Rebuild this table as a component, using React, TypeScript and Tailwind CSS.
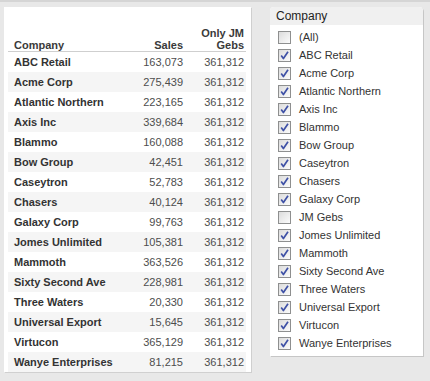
import React from 'react';

const rows: [string, string][] = [
  ['ABC Retail', '163,073'],
  ['Acme Corp', '275,439'],
  ['Atlantic Northern', '223,165'],
  ['Axis Inc', '339,684'],
  ['Blammo', '160,088'],
  ['Bow Group', '42,451'],
  ['Caseytron', '52,783'],
  ['Chasers', '40,124'],
  ['Galaxy Corp', '99,763'],
  ['Jomes Unlimited', '105,381'],
  ['Mammoth', '363,526'],
  ['Sixty Second Ave', '228,981'],
  ['Three Waters', '20,330'],
  ['Universal Export', '15,645'],
  ['Virtucon', '365,129'],
  ['Wanye Enterprises', '81,215'],
];

const filterItems: { label: string; checked: boolean }[] = [
  { label: '(All)', checked: false },
  ...rows.slice(0, 9).map(([name]) => ({ label: name, checked: true })),
  { label: 'JM Gebs', checked: false },
  ...rows.slice(9).map(([name]) => ({ label: name, checked: true })),
];

function CheckBox({ checked }: { checked: boolean }) {
  return (
    <span className="flex h-[13px] w-[13px] shrink-0 items-center justify-center border border-[#8e8f8f] bg-gradient-to-br from-[#dcdcdc] to-[#fbfbfb]">
      {checked && (
        <svg width="11" height="11" viewBox="0 0 11 11">
          <path d="M2.2 5.6 L4.4 8.6 L9 1.8" fill="none" stroke="#3f51a6" strokeWidth="1.7" strokeLinejoin="round" />
        </svg>
      )}
    </span>
  );
}

export default function App() {
  return (
    <div
      className="flex h-[381px] w-[430px] items-start border-t-2 border-[#d5d5d5] bg-[#e8e8e8] pl-[4px] pt-[5px]"
      style={{ fontFamily: '"Liberation Sans", Arial, sans-serif' }}
    >
      {/* Crosstab */}
      <div className="h-[365px] w-[247px] bg-white pl-[4px] pr-[5px] shadow-[1px_1px_0_#cfcfcf]">
        <div className="grid h-[45px] grid-cols-[1fr_70px_61px] items-end border-b border-[#cfcfcf] pr-[2px] text-[11px] font-bold leading-[12px] text-[#3a3a3a]">
          <div className="pl-[6px]">Company</div>
          <div className="text-right">Sales</div>
          <div className="text-right">
            Only JM
            <br />
            Gebs
          </div>
        </div>
        {rows.map(([name, sales], i) => (
          <div
            key={name}
            className={`grid h-[20px] grid-cols-[1fr_70px_61px] items-center pr-[2px] text-[11px] ${
              i % 2 === 1 ? 'bg-[#f5f5f5]' : 'bg-white'
            }`}
          >
            <div className="pl-[6px] font-bold text-[#333]">{name}</div>
            <div className="text-right text-[#4d4d4d]">{sales}</div>
            <div className="text-right text-[#4d4d4d]">361,312</div>
          </div>
        ))}
        <div className="h-px bg-[#d0d0d0]" />
      </div>

      {/* Quick filter */}
      <div className="ml-[19px] h-[349px] w-[153px] rounded-t-[4px] bg-white shadow-[1px_1px_0_#c6c6c6]">
        <div className="flex h-[18px] items-center rounded-t-[4px] bg-[#f0f0f0] pl-[6px] text-[12px] text-[#1e1e1e]">
          Company
        </div>
        <div className="pt-[3px]">
          {filterItems.map((item) => (
            <div key={item.label} className="flex h-[18px] items-center gap-[8px] pl-[8px] text-[11px] text-[#333]">
              <CheckBox checked={item.checked} />
              <span>{item.label}</span>
            </div>
          ))}
        </div>
      </div>
    </div>
  );
}
